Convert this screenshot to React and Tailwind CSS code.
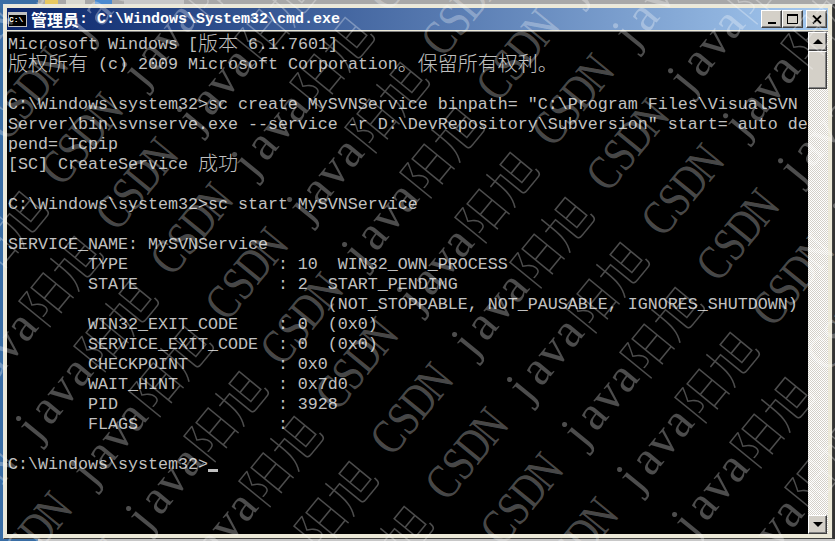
import React from 'react';

function Zh({ children }) {
    return <span className="inline-block h-[20px] align-top -translate-y-[2px] text-[20px] leading-[20px] font-['Noto_Sans_CJK_SC',sans-serif] font-light">{children}</span>;
}

const lines = [
    <>Microsoft Windows [<Zh>版本</Zh> 6.1.7601]</>,
    <><Zh>版权所有</Zh> (c) 2009 Microsoft Corporation<Zh>。保留所有权利。</Zh></>,
    '',
    'C:\\Windows\\system32>sc create MySVNService binpath= "C:\\Program Files\\VisualSVN',
    'Server\\bin\\svnserve.exe --service -r D:\\DevRepository\\Subversion" start= auto de',
    'pend= Tcpip',
    <>[SC] CreateService <Zh>成功</Zh></>,
    '',
    'C:\\Windows\\system32>sc start MySVNService',
    '',
    'SERVICE_NAME: MySVNService',
    '        TYPE               : 10  WIN32_OWN_PROCESS',
    '        STATE              : 2  START_PENDING',
    '                                (NOT_STOPPABLE, NOT_PAUSABLE, IGNORES_SHUTDOWN)',
    '        WIN32_EXIT_CODE    : 0  (0x0)',
    '        SERVICE_EXIT_CODE  : 0  (0x0)',
    '        CHECKPOINT         : 0x0',
    '        WAIT_HINT          : 0x7d0',
    '        PID                : 3928',
    '        FLAGS              :',
    '',
];

// watermark rows, one step of (55,45) between them
const rows = [];
for (let k = -12; k < 12; k++) rows.push(k);

// the watermark font has half-width latin letters, so each one gets its own cell
function Cells({ text, glyph }) {
    return text.split('').map((c, i) => (
        <span key={i} className="flex w-[24.36px] justify-center">
            <span className={glyph}>{c}</span>
        </span>
    ));
}

function Watermark() {
    return (
        <div className="absolute inset-0 overflow-hidden pointer-events-none font-['Liberation_Serif',serif] text-[48.7px] leading-none text-white/30">
            {rows.map((k) => (
                <div
                    key={k}
                    className="absolute flex origin-top-left rotate-[-50.7deg] whitespace-nowrap"
                    style={{ left: 438 + k * 55 - 647, top: 337 + k * 45 + 792 }}
                >
                    {[0, 1, 2, 3, 4, 5].map((i) => (
                        <div key={i} className="flex w-[341px] shrink-0">
                            <Cells text="java" glyph="scale-x-100" />
                            <span className="font-['Noto_Sans_CJK_SC',sans-serif] font-thin">阳旭</span>
                            <span className="w-[24.36px]" />
                            <Cells text="CSDN" glyph="scale-x-[0.8]" />
                        </div>
                    ))}
                </div>
            ))}
        </div>
    );
}

function CaptionButton({ children, className }) {
    return (
        <div className={`w-[21px] h-[18px] flex items-center justify-center bg-[#d4d0c8] border border-t-white border-l-white border-r-[#404040] border-b-[#404040] shadow-[inset_-1px_-1px_0_#808080] ${className || ''}`}>
            {children}
        </div>
    );
}

function ScrollArrow({ up }) {
    return (
        <div className="h-[19px] flex items-center justify-center bg-[#d4d0c8] border border-t-white border-l-white border-r-[#404040] border-b-[#404040] shadow-[inset_-1px_-1px_0_#808080]">
            <div className={up
                ? 'w-0 h-0 border-x-[5px] border-x-transparent border-b-[5px] border-b-black'
                : 'w-0 h-0 border-x-[5px] border-x-transparent border-t-[5px] border-t-black'} />
        </div>
    );
}

export default function App() {
    return (
        <div className="relative w-[835px] h-[541px] overflow-hidden bg-[#3a6ea5] flex flex-col">
            {/* strip of the desktop above the window */}
            <div className="h-[4px] bg-[#a8a8a8] flex shrink-0">
                <div className="w-[38px] bg-[#3a6ea5]" />
                <div className="w-[13px] ml-[7px] bg-[#e8c860]" />
                <div className="w-[19px] ml-[8px] bg-[#d8d8d0]" />
                <div className="w-[17px] ml-[10px] bg-[#4a8ad0]" />
                <div className="w-[60px] ml-[12px] bg-[#c8c8c8]" />
            </div>
            <div className="flex-1 flex min-h-0">
                <div className="w-[3px] shrink-0" />
                {/* window */}
                <div className="w-[830px] h-[535px] bg-[#ece9d8] border border-[#e8e8e0] border-r-[#404040] border-b-[#404040] pl-[3px] pr-[4px] pt-[3px] pb-[4px] flex flex-col shrink-0">
                    <div className="h-[22px] bg-gradient-to-r from-[#0a246a] to-[#a6caf0] flex items-center pl-[1px] pr-[1px] shrink-0">
                        <div className="w-[19px] h-[15px] bg-black border border-[#c0c0c0] border-t-[3px] text-[8px] leading-[9px] font-bold text-white font-['Liberation_Mono',monospace] overflow-hidden mr-[4px]">
                            C:\
                        </div>
                        <span className="text-white text-[16px] font-bold font-['Noto_Sans_CJK_SC',sans-serif] leading-none">管理员</span>
                        <span className="text-white text-[15px] font-bold font-['Liberation_Mono',monospace] leading-none whitespace-pre">: C:\Windows\System32\cmd.exe</span>
                        <div className="ml-auto flex items-center">
                            <CaptionButton>
                                <div className="w-[8px] h-[2px] bg-black mt-[7px]" />
                            </CaptionButton>
                            <CaptionButton>
                                <div className="w-[11px] h-[10px] border border-t-2 border-black" />
                            </CaptionButton>
                            <CaptionButton className="ml-[3px]">
                                <svg width="10" height="9" viewBox="0 0 10 9">
                                    <path d="M1 0.5 L9 8.5 M9 0.5 L1 8.5" stroke="#000" strokeWidth="1.8" fill="none" />
                                </svg>
                            </CaptionButton>
                        </div>
                    </div>
                    <div className="flex-1 mt-[1px] flex min-h-0 border-t border-[#808080]">
                        <div className="w-[801px] shrink-0 bg-black pl-[1px] pt-[3px] text-[#c0c0c0] text-[16.67px] leading-[20px] font-['Liberation_Mono',monospace] whitespace-pre">
                            {lines.map((line, i) => (
                                <div key={i} className="h-[20px]">{line}</div>
                            ))}
                            <div className="h-[20px]">
                                C:\Windows\system32&gt;
                                <span className="inline-block w-[10px] h-[3px] bg-[#c0c0c0] align-[-3px]" />
                            </div>
                        </div>
                        <div className="w-[20px] shrink-0 pr-[1px] flex flex-col bg-[repeating-conic-gradient(#ffffff_0_25%,#d4d0c8_0_50%)] bg-[length:2px_2px]">
                            <ScrollArrow up />
                            <div className="h-[38px] bg-[#d4d0c8] border border-t-white border-l-white border-r-[#404040] border-b-[#404040] shadow-[inset_-1px_-1px_0_#808080]" />
                            <div className="flex-1" />
                            <ScrollArrow />
                        </div>
                    </div>
                </div>
                <div className="flex-1 bg-[#333333]" />
            </div>
            <div className="h-[2px] bg-[#c8c8c8] shrink-0 flex">
                <div className="w-[38px] bg-[#3a6ea5]" />
            </div>
            <Watermark />
        </div>
    );
}
